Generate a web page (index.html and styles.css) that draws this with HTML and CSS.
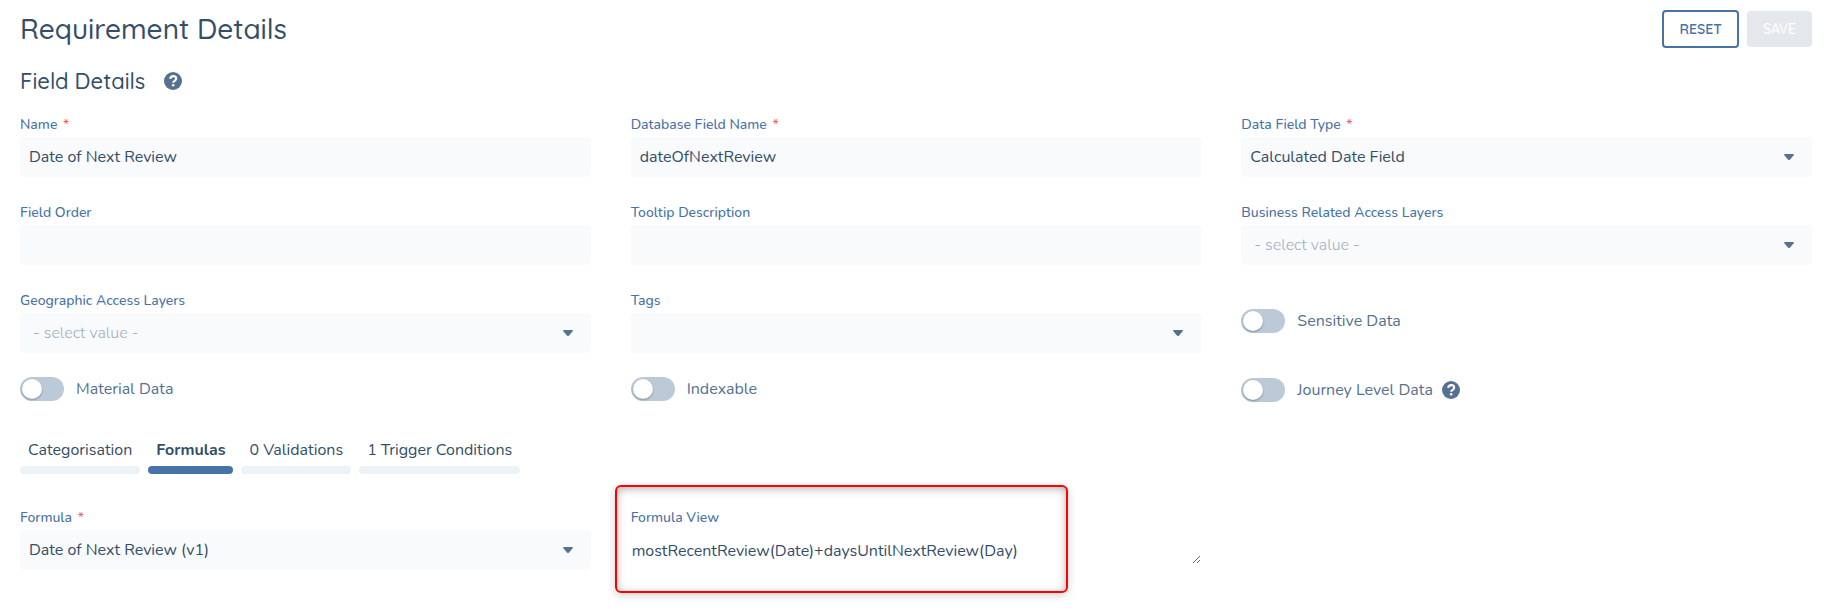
FILE: index.html
```
<!DOCTYPE html>
<html lang="en">
<head>
<meta charset="UTF-8">
<title>Requirement Details</title>
<meta name="viewport" content="width=device-width,initial-scale=1" />
<link rel="stylesheet" href="styles.css">
</head>
<body>

  <header class="page-header">
    <h1>Requirement Details</h1>
    <div class="actions">
      <button type="button" class="btn btn-outline">RESET</button>
      <button type="submit" class="btn btn-save" form="requirement" disabled>SAVE</button>
    </div>
  </header>

  <form id="requirement">
    <div class="section-title">
      <h2>Field Details</h2>
      <svg class="help" viewBox="0 0 512 512" role="img" aria-label="Help"><circle cx="256" cy="256" r="256"/><path d="M176 194c8-52 40-78 86-78 50 0 84 30 84 72 0 34-20 52-42 66-30 18-42 26-42 54" /><circle class="dot" cx="261" cy="376" r="36"/></svg>
    </div>

    <div class="grid fields">
      <div class="field">
        <label for="name">Name <span class="req">*</span></label>
        <input class="control" type="text" id="name" value="Date of Next Review">
      </div>
      <div class="field">
        <label for="dbName">Database Field Name <span class="req">*</span></label>
        <input class="control" type="text" id="dbName" value="dateOfNextReview">
      </div>
      <div class="field">
        <label for="fieldType">Data Field Type <span class="req">*</span></label>
        <div class="select">
          <select class="control" id="fieldType"><option>Calculated Date Field</option></select>
          <svg class="caret" viewBox="0 0 10 6"><path d="M1 0h8q1.500 .5 .5 1.500L6 5.500q-1 1-2 0L.5 1.500Q-.5.500 1 0z"/></svg>
        </div>
      </div>

      <div class="field">
        <label for="order">Field Order</label>
        <input class="control" type="text" id="order">
      </div>
      <div class="field">
        <label for="tooltip">Tooltip Description</label>
        <input class="control" type="text" id="tooltip">
      </div>
      <div class="field">
        <label for="business">Business Related Access Layers</label>
        <div class="select">
          <select class="control empty" id="business"><option>- select value -</option></select>
          <svg class="caret" viewBox="0 0 10 6"><path d="M1 0h8q1.500 .5 .5 1.500L6 5.500q-1 1-2 0L.5 1.500Q-.5.500 1 0z"/></svg>
        </div>
      </div>

      <div class="field">
        <label for="geographic">Geographic Access Layers</label>
        <div class="select">
          <select class="control empty" id="geographic"><option>- select value -</option></select>
          <svg class="caret" viewBox="0 0 10 6"><path d="M1 0h8q1.500 .5 .5 1.500L6 5.500q-1 1-2 0L.5 1.500Q-.5.500 1 0z"/></svg>
        </div>
      </div>
      <div class="field">
        <label for="tags">Tags</label>
        <div class="select">
          <select class="control" id="tags"><option></option></select>
          <svg class="caret" viewBox="0 0 10 6"><path d="M1 0h8q1.500 .5 .5 1.500L6 5.500q-1 1-2 0L.5 1.500Q-.5.500 1 0z"/></svg>
        </div>
      </div>
      <div class="switch beside-field">
        <input type="checkbox" id="sensitive">
        <label for="sensitive">Sensitive Data</label>
      </div>
    </div>

    <div class="grid switches">
      <div class="switch">
        <input type="checkbox" id="material">
        <label for="material">Material Data</label>
      </div>
      <div class="switch">
        <input type="checkbox" id="indexable">
        <label for="indexable">Indexable</label>
      </div>
      <div class="switch with-help">
        <input type="checkbox" id="journey">
        <label for="journey">Journey Level Data</label>
        <svg class="help" viewBox="0 0 512 512" role="img" aria-label="Help"><circle cx="256" cy="256" r="256"/><path d="M176 194c8-52 40-78 86-78 50 0 84 30 84 72 0 34-20 52-42 66-30 18-42 26-42 54" /><circle class="dot" cx="261" cy="376" r="36"/></svg>
      </div>
    </div>

    <div class="tabs" role="tablist">
      <button type="button" role="tab" class="tab">Categorisation</button>
      <button type="button" role="tab" class="tab active" aria-selected="true">Formulas</button>
      <button type="button" role="tab" class="tab">0 Validations</button>
      <button type="button" role="tab" class="tab">1 Trigger Conditions</button>
    </div>

    <div class="grid">
      <div class="field">
        <label for="formula">Formula <span class="req">*</span></label>
        <div class="select">
          <select class="control" id="formula"><option>Date of Next Review (v1)</option></select>
          <svg class="caret" viewBox="0 0 10 6"><path d="M1 0h8q1.500 .5 .5 1.500L6 5.500q-1 1-2 0L.5 1.500Q-.5.500 1 0z"/></svg>
        </div>
      </div>
      <div class="field highlighted">
        <label for="formulaView">Formula View</label>
        <textarea id="formulaView" rows="1" readonly>mostRecentReview(Date)+daysUntilNextReview(Day)</textarea>
      </div>
    </div>
  </form>

</body>
</html>
```
FILE: styles.css
```
*, *::before, *::after {
  box-sizing: border-box;
}
body {
  margin: 0;
  padding: 10px 24px 46px 20px;
  background: #fff;
  color: #334e68;
  font-family: Nunito, Lato, sans-serif;
  font-size: 16px;
}
h1, h2 {
  margin: 0;
  font-family: Quicksand, Lato, sans-serif;
  font-weight: 500;
}
h1 {
  font-size: 28px;
  line-height: 36px;
}
h2 {
  font-size: 22px;
  line-height: 28px;
}
button, input, select, textarea {
  font: inherit;
  color: inherit;
}

.page-header {
  display: flex;
  justify-content: space-between;
  align-items: center;
}
.actions {
  display: flex;
  align-items: center;
  gap: 8px;
}
.btn {
  height: 36px;
  padding: 0 16px;
  border: 0;
  border-radius: 4px;
  font-family: Quicksand, Lato, sans-serif;
  font-size: 14px;
}
.btn-outline {
  height: 38px;
  padding: 0 15px;
  border: 2px solid #4873a6;
  background: #fff;
  color: #4873a6;
  font-weight: 600;
}
.btn-save {
  background: #e4e7eb;
  color: #fff;
  font-weight: 500;
}

.section-title {
  display: flex;
  align-items: center;
  gap: 19px;
  margin: 19px 0 22px;
}
.help {
  width: 18px;
  height: 18px;
  fill: #557192;
}
.help path {
  fill: none;
  stroke: #fff;
  stroke-width: 60px;
}
.help .dot {
  fill: #fff;
}

.grid {
  display: grid;
  grid-template-columns: repeat(3, 1fr);
  column-gap: 40px;
  align-items: start;
}
.fields {
  row-gap: 28px;
}
.field {
  display: flex;
  flex-direction: column;
  gap: 4px;
}
.field label {
  color: #4873a6;
  font-size: 14px;
  font-weight: 500;
  line-height: 16px;
}
.req {
  margin-left: 2px;
  color: #ef6b64;
}
.control {
  display: block;
  width: 100%;
  height: 40px;
  padding: 0 9px;
  border: 0;
  border-radius: 4px;
  background: #f8fafc;
  appearance: none;
}
.empty {
  padding-left: 13px;
  color: #9fb0c2;
  font-weight: 300;
}
.select {
  position: relative;
}
.caret {
  position: absolute;
  top: 17px;
  right: 18px;
  width: 10px;
  height: 6px;
  fill: #557192;
  pointer-events: none;
}

.switch {
  display: flex;
  align-items: center;
  gap: 12px;
  color: #557192;
}
.switch input {
  width: 44px;
  height: 24px;
  margin: 0;
  padding: 2px;
  border-radius: 12px;
  background: #bccad8;
  appearance: none;
}
.switch input::before {
  content: "";
  display: block;
  width: 20px;
  height: 20px;
  border-radius: 50%;
  background: #fff;
  box-shadow: 0 1px 2px rgba(51, 78, 104, .5);
}
.switch input:checked::before {
  margin-left: 20px;
}
.beside-field {
  padding-top: 16px;
}
.switches {
  margin-top: 24px;
}
.with-help {
  min-height: 26px;
}
.with-help .help {
  margin-left: -3px;
}

.tabs {
  display: flex;
  gap: 8px;
  margin: 35px 0 36px;
}
.tab {
  padding: 0 8px;
  border: 0;
  background: none;
  line-height: 24px;
}
.tab::after {
  content: "";
  display: block;
  height: 8px;
  margin: 4px -8px 0;
  border-radius: 4px;
  background: #edf2f7;
}
.tab.active {
  font-weight: 700;
}
.tab.active::after {
  background: #4873a6;
}

textarea {
  display: block;
  width: 100%;
  height: 34px;
  padding: 11px 1px 3px;
  border: 0;
  background: none;
  line-height: 20px;
  overflow: hidden;
  resize: vertical;
}

/* red frame round the formula text */
.highlighted {
  position: relative;
}
.highlighted::after {
  content: "";
  position: absolute;
  top: -25px;
  left: -16px;
  width: 453px;
  height: 108px;
  border: 2px solid #f00;
  border-radius: 6px;
  box-shadow: 0 2px 8px rgba(0, 0, 0, .2), inset 0 2px 8px rgba(0, 0, 0, .3);
  pointer-events: none;
}
```
